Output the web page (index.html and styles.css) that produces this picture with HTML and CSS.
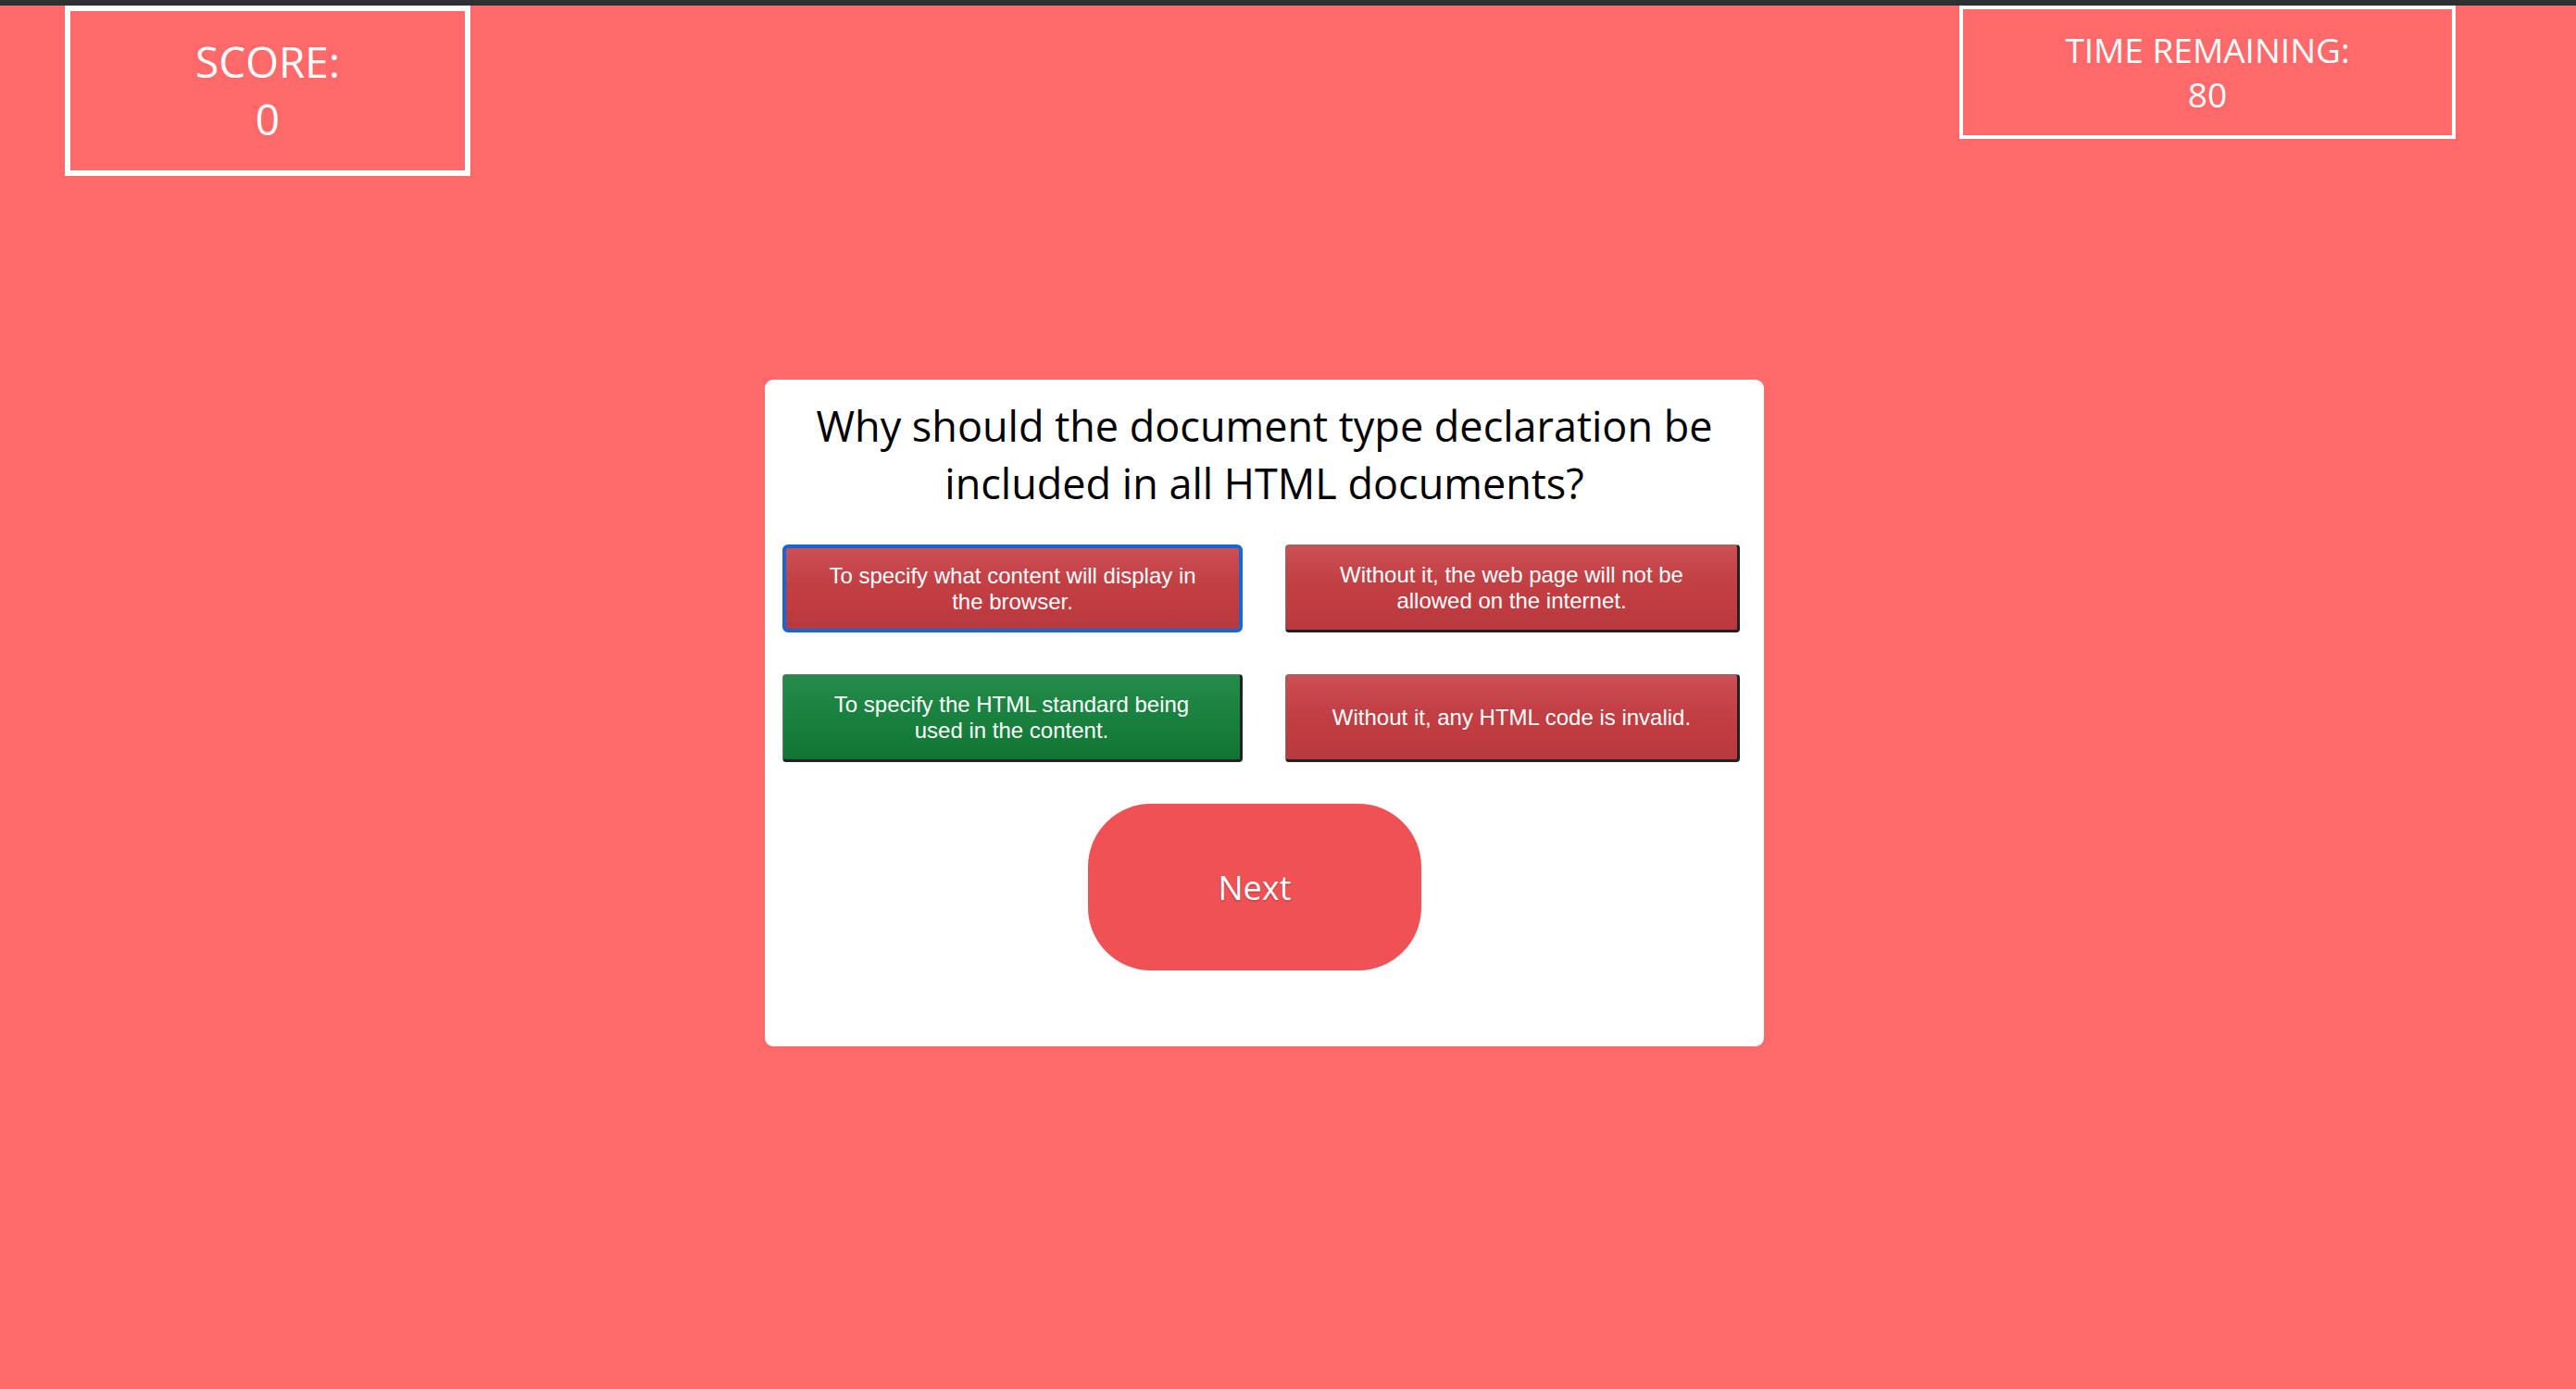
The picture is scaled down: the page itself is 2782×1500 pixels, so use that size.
FILE: index.html
```html
<!DOCTYPE html>
<html lang="en">
<head>
<meta charset="utf-8">
<title>Quiz</title>
<link rel="stylesheet" href="styles.css">
</head>
<body>
<div class="topbar"></div>
<header class="hud">
  <div class="score-box">
    <div>SCORE:</div>
    <div>0</div>
  </div>
  <div class="time-box">
    <div>TIME REMAINING:</div>
    <div>80</div>
  </div>
</header>
<main class="card">
  <h2 class="question">Why should the document type declaration be included in all HTML documents?</h2>
  <div class="options">
    <button class="opt red focused">To specify what content will display in the browser.</button>
    <button class="opt red">Without it, the web page will not be allowed on the internet.</button>
    <button class="opt green">To specify the HTML standard being used in the content.</button>
    <button class="opt red">Without it, any HTML code is invalid.</button>
  </div>
  <div class="next-row">
    <button class="next">Next</button>
  </div>
</main>
</body>
</html>
```
FILE: styles.css
```css
html, body {
  margin: 0;
  padding: 0;
}
body {
  background: #ff6969;
  font-family: "Open Sans", "Noto Sans", sans-serif;
  min-height: 1500px;
}
.topbar {
  height: 6px;
  background: #2f3033;
}
.hud {
  display: flex;
  justify-content: space-between;
  align-items: flex-start;
  padding: 0 130px 0 70px;
}
.score-box {
  box-sizing: border-box;
  width: 438px;
  height: 184px;
  border: 6px solid #fff;
  color: #fff;
  font-size: 46px;
  line-height: 62px;
  text-align: center;
  padding-top: 23px;
}
.time-box {
  box-sizing: border-box;
  width: 536px;
  height: 144px;
  border: 4px solid #fff;
  color: #fff;
  font-size: 37px;
  line-height: 48px;
  text-align: center;
  padding-top: 20px;
}
.card {
  box-sizing: border-box;
  width: 1079px;
  height: 720px;
  margin: 220px 0 0 826px;
  background: #fff;
  border-radius: 9px;
  padding: 19px 25px 0 19px;
  display: flex;
  flex-direction: column;
}
.question {
  margin: 0;
  font-weight: 400;
  font-size: 45px;
  line-height: 61.5px;
  color: #000;
  text-align: center;
  padding: 0 0 0 6px;
}
.options {
  display: grid;
  grid-template-columns: 497px 491px;
  grid-auto-rows: 95px;
  column-gap: 46px;
  row-gap: 45px;
  margin-top: 36px;
}
.opt {
  box-sizing: border-box;
  display: flex;
  align-items: center;
  justify-content: center;
  padding: 0 36px;
  font-family: "Liberation Sans", Arial, sans-serif;
  font-size: 24px;
  line-height: 27.5px;
  color: #fff;
  text-align: center;
  border: 1px solid #777;
  border-right: 3px solid #222;
  border-bottom: 3px solid #222;
  border-radius: 4px;
  cursor: pointer;
}
.opt.red {
  background: linear-gradient(to bottom, #cb5054 0%, #c23f44 45%, #bf3b40 75%, #b53a3e 100%);
}
.opt.green {
  background: linear-gradient(to bottom, #258b4c 0%, #1a8240 45%, #147a37 80%, #137233 100%);
}
.opt.focused {
  border: 4px solid #1766d4;
  border-radius: 6px;
}
.next-row {
  display: flex;
  margin-top: 45px;
}
.next {
  width: 360px;
  height: 180px;
  margin-left: 330px;
  border: none;
  border-radius: 68px;
  background: #ef5155;
  color: #fff;
  font-family: "Open Sans", "Noto Sans", sans-serif;
  font-size: 36px;
  text-shadow: 0 1px 2px rgba(0, 0, 0, 0.3);
  cursor: pointer;
}
```
